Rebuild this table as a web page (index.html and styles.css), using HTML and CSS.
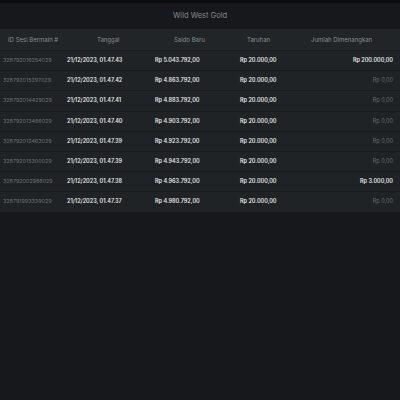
FILE: index.html
```html
<!DOCTYPE html>
<html lang="id">
<head>
<meta charset="utf-8">
<link rel="stylesheet" href="styles.css">
</head>
<body>
<div class="topbar"></div>
<div class="titlebar">Wild West Gold</div>
<div class="table">
  <div class="row head">
    <div class="c1">ID Sesi Bermain #</div>
    <div class="c2">Tanggal</div>
    <div class="c3">Saldo Baru</div>
    <div class="c4">Taruhan</div>
    <div class="c5">Jumlah Dimenangkan</div>
  </div>
  <div class="row">
    <div class="c1">328792016254029</div>
    <div class="c2">21/12/2023, 01.47.43</div>
    <div class="c3">Rp 5.043.792,00</div>
    <div class="c4">Rp 20.000,00</div>
    <div class="c5">Rp 200.000,00</div>
  </div>
  <div class="row">
    <div class="c1">328792015297029</div>
    <div class="c2">21/12/2023, 01.47.42</div>
    <div class="c3">Rp 4.863.792,00</div>
    <div class="c4">Rp 20.000,00</div>
    <div class="c5 zero">Rp 0,00</div>
  </div>
  <div class="row">
    <div class="c1">328792014429029</div>
    <div class="c2">21/12/2023, 01.47.41</div>
    <div class="c3">Rp 4.883.792,00</div>
    <div class="c4">Rp 20.000,00</div>
    <div class="c5 zero">Rp 0,00</div>
  </div>
  <div class="row">
    <div class="c1">328792013466029</div>
    <div class="c2">21/12/2023, 01.47.40</div>
    <div class="c3">Rp 4.903.792,00</div>
    <div class="c4">Rp 20.000,00</div>
    <div class="c5 zero">Rp 0,00</div>
  </div>
  <div class="row">
    <div class="c1">328792012463029</div>
    <div class="c2">21/12/2023, 01.47.39</div>
    <div class="c3">Rp 4.923.792,00</div>
    <div class="c4">Rp 20.000,00</div>
    <div class="c5 zero">Rp 0,00</div>
  </div>
  <div class="row">
    <div class="c1">328792015300029</div>
    <div class="c2">21/12/2023, 01.47.39</div>
    <div class="c3">Rp 4.943.792,00</div>
    <div class="c4">Rp 20.000,00</div>
    <div class="c5 zero">Rp 0,00</div>
  </div>
  <div class="row">
    <div class="c1">328792002988029</div>
    <div class="c2">21/12/2023, 01.47.38</div>
    <div class="c3">Rp 4.963.792,00</div>
    <div class="c4">Rp 20.000,00</div>
    <div class="c5">Rp 3.000,00</div>
  </div>
  <div class="row">
    <div class="c1">328791993339029</div>
    <div class="c2">21/12/2023, 01.47.37</div>
    <div class="c3">Rp 4.980.792,00</div>
    <div class="c4">Rp 20.000,00</div>
    <div class="c5 zero">Rp 0,00</div>
  </div>
</div>
</body>
</html>
```
FILE: styles.css
```css
html, body {
  margin: 0;
  padding: 0;
  background: #16181b;
  width: 400px;
  height: 400px;
  overflow: hidden;
  font-family: Inter, "Noto Sans", sans-serif;
  font-variant-numeric: proportional-nums;
}
.topbar {
  height: 3px;
  background: #0b0b0c;
}
.titlebar {
  height: 26px;
  line-height: 26px;
  background: #17181b;
  color: #85888c;
  font-size: 7.5px;
  text-align: center;
}
.table {
  background: #1f2326;
}
.row {
  display: grid;
  grid-template-columns: 62px 62px 85px 75px 1fr;
  height: 19.2px;
  line-height: 19.2px;
  border-top: 1px solid #191c1f;
  font-size: 5.5px;
  font-weight: 600;
  color: #e4e5e6;
  white-space: nowrap;
}
.row.head {
  height: 21px;
  line-height: 21px;
  border-top: none;
  background: #212528;
  font-size: 6px;
  font-weight: 400;
  color: #878d92;
}
.row .c1 { padding-left: 3px; font-weight: 400; color: #6d7175; font-size: 5.4px; }
.row .c2 { padding-left: 5px; }
.row .c3 { padding-left: 31px; }
.row .c4 { padding-left: 31px; }
.row .c5 { text-align: right; padding-right: 7px; }
.row .zero { font-weight: 400; color: #686c70; }
.row.head .c1 { padding-left: 8px; color: #878d92; font-size: 6px; }
.row.head .c2 { padding-left: 35px; }
.row.head .c3 { padding-left: 50px; }
.row.head .c4 { padding-left: 38px; }
.row.head .c5 { text-align: left; padding-left: 27px; padding-right: 0; }
```
